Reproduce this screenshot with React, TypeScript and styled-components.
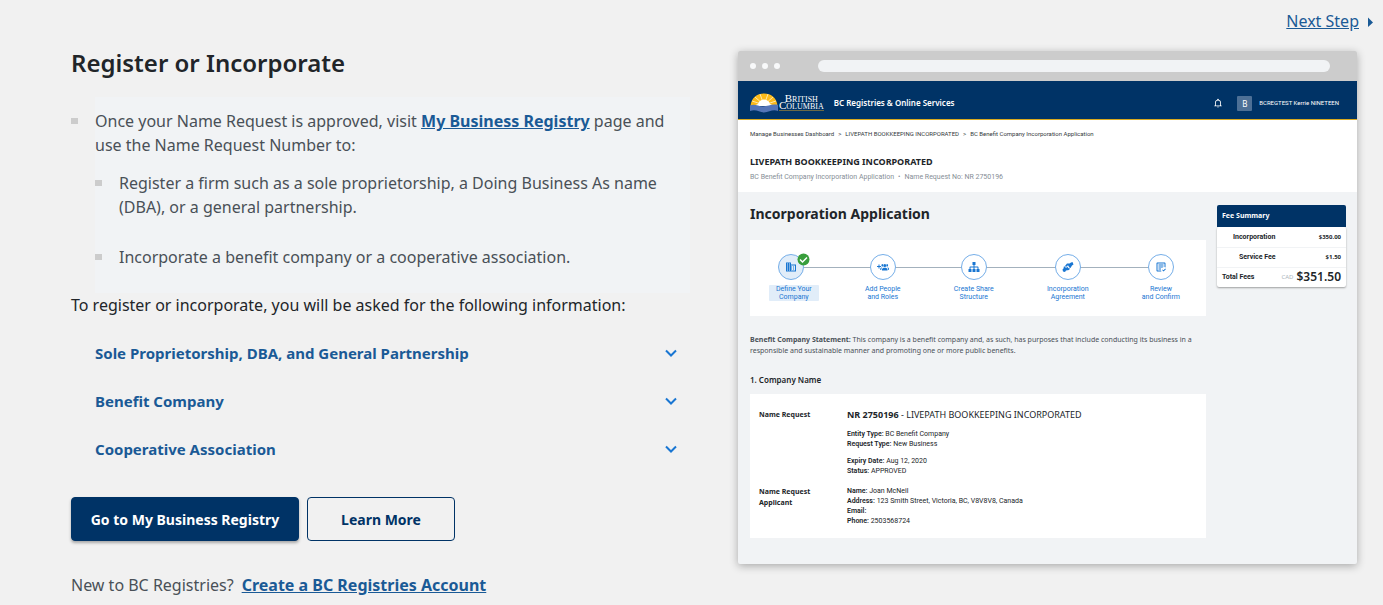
import React from "react";
import styled, { createGlobalStyle } from "styled-components";

const navy = "#003366";
const link = "#1a5a96";
const blue = "#1976d2";
const compactFont = 'Roboto, "Noto Sans", sans-serif';

const GlobalStyle = createGlobalStyle`
  *, *::before, *::after { box-sizing: border-box; }
  body {
    margin: 0;
    background: #f1f1f1;
    color: #212529;
    font-family: "Noto Sans", "Open Sans", sans-serif;
    font-size: 16px;
    line-height: 24px;
  }
  h1, h2, h3, p, ul, ol, dl, dd { margin: 0; padding: 0; }
  ul, ol { list-style: none; }
  button { font: inherit; cursor: pointer; }
`;

const Page = styled.main`
  padding: 9px 26px 8px 71px;
`;

const StepNav = styled.nav`
  display: flex;
  justify-content: flex-end;
  margin-right: -16px;
`;

const NextLink = styled.a`
  display: flex;
  align-items: center;
  gap: 9px;
  color: ${link};
  text-decoration: none;
  span { text-decoration: underline; }
  svg { margin-top: 2px; }
`;

const Columns = styled.div`
  display: grid;
  grid-template-columns: minmax(0, 1fr) minmax(0, 1fr);
  gap: 48px;
  align-items: start;
  padding-top: 18px;
`;

const Title = styled.h1`
  margin-top: -4px;
  font-size: 24px;
  line-height: 32px;
  font-weight: 600;
`;

const BulletItem = styled.li`
  position: relative;
  padding: 12px 0;
  background: #f1f3f5;
  color: #495057;
  &::before {
    content: "";
    position: absolute;
    left: -24px;
    top: 21px;
    width: 7px;
    height: 6px;
    background: #cccccc;
  }
`;

const BulletList = styled.ul`
  margin: 18px 0 0 24px;
`;

const NestedList = styled.ul`
  display: flex;
  flex-direction: column;
  gap: 2px;
  padding: 2px 0 0 24px;
`;

const StrongLink = styled.a`
  color: ${link};
  font-weight: 700;
`;

const Accordion = styled.div`
  display: flex;
  flex-direction: column;
  padding: 12px 12px 0 24px;
`;

const AccordionButton = styled.button`
  display: flex;
  align-items: center;
  justify-content: space-between;
  height: 48px;
  padding: 0;
  border: 0;
  background: none;
  color: ${link};
  font-size: 15px;
  font-weight: 700;
  text-align: left;
`;

const Actions = styled.div`
  display: flex;
  gap: 8px;
  margin: 24px 0 32px;
`;

const ActionButton = styled.button<{ $primary?: boolean }>`
  height: 44px;
  min-width: ${(p) => (p.$primary ? 228 : 148)}px;
  padding: 2px 16px 0;
  border: 1px solid ${navy};
  border-radius: 4px;
  background: ${(p) => (p.$primary ? navy : "transparent")};
  color: ${(p) => (p.$primary ? "#ffffff" : navy)};
  font-size: 14px;
  font-weight: 700;
  box-shadow: ${(p) => (p.$primary ? "0 2px 3px rgba(0, 0, 0, 0.3)" : "none")};
`;

const SignUp = styled.p`
  display: flex;
  gap: 8px;
  color: #495057;
`;

const Browser = styled.section`
  overflow: hidden;
  border-radius: 2px;
  background: #f1f3f5;
  box-shadow: 0 2px 8px rgba(0, 0, 0, 0.3);
  font-size: 7px;
  line-height: 10px;
`;

const BrowserBar = styled.div`
  display: flex;
  align-items: center;
  gap: 6px;
  height: 30px;
  padding: 0 27px 0 12px;
  background: #cccccc;
`;

const Dot = styled.span`
  width: 6px;
  height: 6px;
  border-radius: 50%;
  background: #f8f9fa;
`;

const AddressBar = styled.span`
  flex: 1;
  height: 12px;
  margin-left: 32px;
  border-radius: 6px;
  background: #f1f3f5;
`;

const AppHeader = styled.header`
  display: flex;
  align-items: center;
  height: 39px;
  padding: 6px 18px 0 12px;
  border-bottom: 1px solid #d9a91f;
  background: ${navy};
  color: #ffffff;
`;

const Wordmark = styled.div`
  margin-left: 1px;
  font-family: "Liberation Serif", serif;
  font-size: 11px;
  font-variant: small-caps;
  line-height: 7px;
  text-align: center;
  span {
    display: block;
    padding-bottom: 1px;
    border-bottom: 1px solid #6b6a45;
  }
`;

const AppName = styled.strong`
  flex: 1;
  margin-left: 10px;
  font-size: 8px;
  font-weight: 600;
`;

const Avatar = styled.span`
  width: 15px;
  margin: 0 7px 0 14px;
  border-radius: 1px;
  background: #4d7096;
  font-size: 8px;
  line-height: 15px;
  text-align: center;
`;

const UserName = styled.span`
  font-family: ${compactFont};
  font-size: 6px;
`;

const AppTop = styled.div`
  height: 72px;
  padding: 9px 12px;
  background: #ffffff;
  font-family: ${compactFont};
`;

const Crumbs = styled.nav`
  display: flex;
  gap: 4px;
  color: #343a40;
  font-size: 6px;
  a { color: inherit; text-decoration: none; }
`;

const CompanyTitle = styled.h2`
  margin-top: 17px;
  font-family: "Noto Sans", sans-serif;
  font-size: 9px;
  line-height: 12px;
  font-weight: 700;
`;

const CompanyMeta = styled.p`
  display: flex;
  gap: 4px;
  margin-top: 4px;
  color: #868e96;
`;

const AppBody = styled.div`
  display: flex;
  align-items: flex-start;
  gap: 11px;
  padding: 13px 11px 26px 12px;
`;

const AppMain = styled.div`
  flex: 1;
  min-width: 0;
`;

const AppTitle = styled.h2`
  font-size: 14px;
  line-height: 18px;
  font-weight: 700;
`;

const Stepper = styled.ol`
  position: relative;
  display: flex;
  justify-content: space-between;
  height: 76px;
  margin-top: 17px;
  padding: 14px 26px 0;
  background: #ffffff;
  &::before {
    content: "";
    position: absolute;
    top: 27px;
    left: 42px;
    right: 46px;
    height: 1px;
    background: #a3b1bd;
  }
`;

const Step = styled.li`
  position: relative;
  display: flex;
  flex-direction: column;
  align-items: center;
  gap: 5px;
`;

const StepMark = styled.div<{ $done?: boolean }>`
  position: relative;
  padding-right: ${(p) => (p.$done ? 6 : 0)}px;
`;

const StepCircle = styled.span<{ $done?: boolean }>`
  display: grid;
  place-items: center;
  width: 26px;
  height: 26px;
  border: 1px solid #75aee8;
  border-radius: 50%;
  background: ${(p) => (p.$done ? "#e1edf9" : "#ffffff")};
  color: ${blue};
`;

const DoneBadge = styled.svg`
  position: absolute;
  top: -1px;
  right: 0;
`;

const StepLabel = styled.span<{ $done?: boolean }>`
  margin: 0 -7px;
  padding: 0 7px;
  border-radius: 1px;
  background: ${(p) => (p.$done ? "#e1edf9" : "transparent")};
  color: ${blue};
  font-family: ${compactFont};
  line-height: 8px;
  text-align: center;
  white-space: pre-line;
`;

const Statement = styled.p`
  margin-top: 18px;
  color: #495057;
  line-height: 11px;
  b { font-weight: 700; }
`;

const SectionTitle = styled.h3`
  margin-top: 18px;
  font-size: 8px;
  line-height: 12px;
  font-weight: 600;
`;

const Details = styled.dl`
  display: grid;
  grid-template-columns: 88px 1fr;
  row-gap: 10px;
  margin-top: 8px;
  padding: 15px 9px 12px;
  background: #ffffff;
  dt { line-height: 11px; font-weight: 700; }
`;

const NameLine = styled.p`
  margin-bottom: 8px;
  font-size: 9px;
  line-height: 12px;
`;

const Facts = styled.p`
  font-family: ${compactFont};
  & + & { margin-top: 7px; }
  span { display: block; }
  b { font-weight: 600; }
`;

const FeeTable = styled.table`
  width: 129px;
  border-collapse: collapse;
  border-radius: 2px;
  background: #ffffff;
  box-shadow: 0 1px 2px rgba(0, 0, 0, 0.35);
  font-family: ${compactFont};
  caption {
    padding: 0 5px;
    border-radius: 2px 2px 0 0;
    background: ${navy};
    color: #ffffff;
    font-family: "Noto Sans", sans-serif;
    font-weight: 700;
    line-height: 22px;
    text-align: left;
  }
  th, td { height: 20px; font-weight: 700; }
  th { padding: 0 0 0 5px; text-align: left; }
  td {
    padding: 0 5px 0 0;
    font-family: "Noto Sans", sans-serif;
    font-size: 6px;
    text-align: right;
  }
`;

const FeeRow = styled.tr<{ $indent: number }>`
  border-bottom: 1px solid #f1f3f5;
  && th { padding-left: ${(p) => p.$indent}px; }
`;

const Total = styled.span`
  display: flex;
  align-items: center;
  justify-content: flex-end;
  gap: 3px;
  small { color: #adb5bd; font-size: 6px; font-weight: 400; }
  strong {
    font-size: 12px;
    line-height: 18px;
    font-weight: 600;
  }
`;

const Glyph = ({ d, size = 12 }: { d: string; size?: number }) => (
  <svg width={size} height={size} viewBox="0 0 24 24" fill="currentColor" aria-hidden="true">
    <path d={d} />
  </svg>
);

const icons = {
  domain:
    "M18 15H16V17H18M18 11H16V13H18M20 19H12V17H14V15H12V13H14V11H12V9H20M10 7H8V5H10M10 11H8V9H10M10 15H8V13H10M10 19H8V17H10M6 7H4V5H6M6 11H4V9H6M6 15H4V13H6M6 19H4V17H6M12 7V3H2V21H22V7H12Z",
  people:
    "M8 10H5V7H3V10H0V12H3V15H5V12H8ZM15.500 6A3 3 0 1 1 15.500 12A3 3 0 1 1 15.500 6ZM10.500 6A2.500 2.500 0 0 1 12.300 7A5 5 0 0 0 12.300 11A2.500 2.500 0 1 1 10.500 6ZM20.500 6A2.500 2.500 0 1 1 18.700 11A5 5 0 0 0 18.700 7A2.500 2.500 0 0 1 20.500 6ZM10 19V16.500C10 14.500 12.500 13.300 15.500 13.300S21 14.500 21 16.500V19ZM6.500 18V15.500C7 14 8.500 13 10.500 13C9.200 14 8.500 15 8.500 18ZM24 18V15.500C24 14 22.500 13 20.500 13C21.800 14 22.500 15 22.500 18Z",
  sitemap:
    "M9 2V8H11V11H5C3.890 11 3 11.890 3 13V16H1V22H7V16H5V13H11V16H9V22H15V16H13V13H19V16H17V22H23V16H21V13C21 11.890 20.110 11 19 11H13V8H15V2H9Z",
  handshake:
    "M21 2L23 7L20 9L17 14L13 12L14 10L11 9L8 12L6 10L10 5L15 5L18 3ZM4 10L7 13L10 13L12 11L12 14L16 15L14 18L8 19L6 22L2 21L1 17L3 15Z",
  review:
    "M17 21L14.250 18L15.410 16.830L17 18.430L20.590 14.830L21.750 16.250M12.800 21H5C3.890 21 3 20.110 3 19V5C3 3.890 3.890 3 5 3H19C20.110 3 21 3.890 21 5V12.800C20.390 12.450 19.720 12.200 19 12.080V5H5V19H12.080C12.200 19.720 12.450 20.390 12.800 21M12 17H7V15H12M14.680 13H7V11H17V12.080C16.150 12.220 15.370 12.540 14.680 13M17 9H7V7H17",
  bell:
    "M10 21H14C14 22.100 13.100 23 12 23S10 22.100 10 21M21 19V20H3V19L5 17V11C5 7.900 7.030 5.170 10 4.290V4C10 2.900 10.900 2 12 2S14 2.900 14 4V4.290C16.970 5.170 19 7.900 19 11V17L21 19M17 11C17 8.240 14.760 6 12 6S7 8.240 7 11V18H17V11Z",
};

const SunLogo = () => (
  <svg width="28" height="20" viewBox="0 0 28 20" aria-hidden="true">
    <path d="M0.500 13C1 5 7 0.500 14 0.500S27 5 27.500 13Z" fill="#fcba19" />
    <path
      d="M14 12L2 8M14 12L5 4M14 12L10 1M14 12L18 1M14 12L23 4M14 12L26 8"
      stroke="#fff3cf"
      strokeWidth="0.800"
    />
    <path d="M8 12A6 5.500 0 0 1 20 12Z" fill="#ffffff" />
    <path d="M3 13L8 11L11 12L14 9.500L17 12L20 11L25 13Z" fill="#ffffff" />
    <path
      d="M0 12.500C5 10.500 8 13.500 13 13.500C18 13.500 22 10.500 28 12V18C23 16 19 19 14 19.500C9 19 6 16 0 18Z"
      fill="#5475b8"
    />
  </svg>
);

const Chevron = () => (
  <svg width="14" height="8" viewBox="0 0 14 8" fill="none" aria-hidden="true">
    <path d="M2 1.500L7 6.500L12 1.500" stroke={blue} strokeWidth="2" />
  </svg>
);

const steps = [
  { label: "Define Your\nCompany", icon: icons.domain, done: true },
  { label: "Add People\nand Roles", icon: icons.people },
  { label: "Create Share\nStructure", icon: icons.sitemap },
  { label: "Incorporation\nAgreement", icon: icons.handshake },
  { label: "Review\nand Confirm", icon: icons.review },
];

const topics = [
  "Sole Proprietorship, DBA, and General Partnership",
  "Benefit Company",
  "Cooperative Association",
];

function AppPreview() {
  return (
    <Browser aria-label="Incorporation application preview">
      <BrowserBar>
        <Dot />
        <Dot />
        <Dot />
        <AddressBar />
      </BrowserBar>
      <AppHeader>
        <SunLogo />
        <Wordmark>
          British
          <span>Columbia</span>
        </Wordmark>
        <AppName>BC Registries &amp; Online Services</AppName>
        <Glyph d={icons.bell} size={10} />
        <Avatar>B</Avatar>
        <UserName>BCREGTEST Kerrie NINETEEN</UserName>
      </AppHeader>
      <AppTop>
        <Crumbs aria-label="Breadcrumb">
          <a href="#dashboard">Manage Businesses Dashboard</a>
          <span>&gt;</span>
          <a href="#company">LIVEPATH BOOKKEEPING INCORPORATED</a>
          <span>&gt;</span>
          <a href="#application">BC Benefit Company Incorporation Application</a>
        </Crumbs>
        <CompanyTitle>LIVEPATH BOOKKEEPING INCORPORATED</CompanyTitle>
        <CompanyMeta>
          <span>BC Benefit Company Incorporation Application</span>
          <span>•</span>
          <span>Name Request No: NR 2750196</span>
        </CompanyMeta>
      </AppTop>
      <AppBody>
        <AppMain>
          <AppTitle>Incorporation Application</AppTitle>
          <Stepper>
            {steps.map((s) => (
              <Step key={s.label}>
                <StepMark $done={s.done}>
                  <StepCircle $done={s.done}>
                    <Glyph d={s.icon} />
                  </StepCircle>
                  {s.done && (
                    <DoneBadge width="13" height="13" viewBox="0 0 13 13">
                      <circle cx="6.5" cy="6.5" r="6" fill="#389e3c" />
                      <path d="M3 6.500L5.500 9L10 4.500" fill="none" stroke="#ffffff" strokeWidth="1.500" />
                    </DoneBadge>
                  )}
                </StepMark>
                <StepLabel $done={s.done}>{s.label}</StepLabel>
              </Step>
            ))}
          </Stepper>
          <Statement>
            <b>Benefit Company Statement:</b> This company is a benefit company and, as such, has
            purposes that include conducting its business in a<br />
            responsible and sustainable manner and promoting one or more public benefits.
          </Statement>
          <SectionTitle>1. Company Name</SectionTitle>
          <Details>
            <dt>Name Request</dt>
            <dd>
              <NameLine>
                <b>NR 2750196</b> - LIVEPATH BOOKKEEPING INCORPORATED
              </NameLine>
              <Facts>
                <span><b>Entity Type:</b> BC Benefit Company</span>
                <span><b>Request Type:</b> New Business</span>
              </Facts>
              <Facts>
                <span><b>Expiry Date:</b> Aug 12, 2020</span>
                <span><b>Status:</b> APPROVED</span>
              </Facts>
            </dd>
            <dt>Name Request<br />Applicant</dt>
            <dd>
              <Facts>
                <span><b>Name:</b> Joan McNeil</span>
                <span><b>Address:</b> 123 Smith Street, Victoria, BC, V8V8V8, Canada</span>
                <span><b>Email:</b></span>
                <span><b>Phone:</b> 2503568724</span>
              </Facts>
            </dd>
          </Details>
        </AppMain>
        <FeeTable>
          <caption>Fee Summary</caption>
          <tbody>
            <FeeRow $indent={16}>
              <th scope="row">Incorporation</th>
              <td>$350.00</td>
            </FeeRow>
            <FeeRow $indent={22}>
              <th scope="row">Service Fee</th>
              <td>$1.50</td>
            </FeeRow>
            <tr>
              <th scope="row">Total Fees</th>
              <td>
                <Total>
                  <small>CAD</small>
                  <strong>$351.50</strong>
                </Total>
              </td>
            </tr>
          </tbody>
        </FeeTable>
      </AppBody>
    </Browser>
  );
}

export default function App() {
  return (
    <Page>
      <GlobalStyle />
      <StepNav>
        <NextLink href="#next">
          <span>Next Step</span>
          <svg width="5" height="10" viewBox="0 0 5 10" fill={link} aria-hidden="true">
            <path d="M0 0.500L5 5.500L0 10Z" />
          </svg>
        </NextLink>
      </StepNav>
      <Columns>
        <section>
          <Title>Register or Incorporate</Title>
          <BulletList>
            <BulletItem>
              Once your Name Request is approved, visit{" "}
              <StrongLink href="#registry">My Business Registry</StrongLink> page and use the Name
              Request Number to:
              <NestedList>
                <BulletItem>
                  Register a firm such as a sole proprietorship, a Doing Business As name (DBA), or
                  a general partnership.
                </BulletItem>
                <BulletItem>Incorporate a benefit company or a cooperative association.</BulletItem>
              </NestedList>
            </BulletItem>
          </BulletList>
          <p>To register or incorporate, you will be asked for the following information:</p>
          <Accordion>
            {topics.map((t) => (
              <AccordionButton key={t} type="button" aria-expanded={false}>
                {t}
                <Chevron />
              </AccordionButton>
            ))}
          </Accordion>
          <Actions>
            <ActionButton type="button" $primary>
              Go to My Business Registry
            </ActionButton>
            <ActionButton type="button">Learn More</ActionButton>
          </Actions>
          <SignUp>
            New to BC Registries?
            <StrongLink href="#account">Create a BC Registries Account</StrongLink>
          </SignUp>
        </section>
        <AppPreview />
      </Columns>
    </Page>
  );
}
